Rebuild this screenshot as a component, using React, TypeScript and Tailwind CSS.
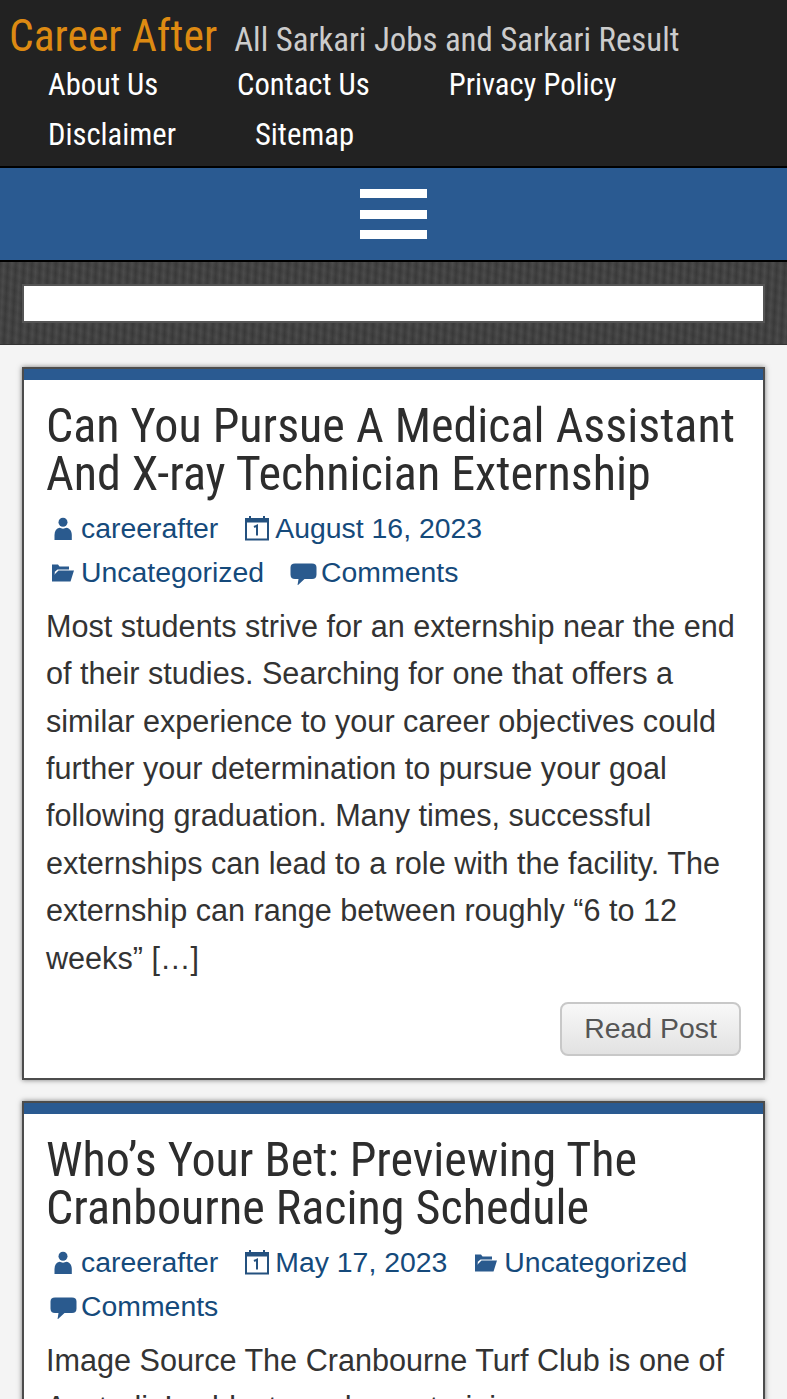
import React from 'react';

const CONDENSED = "font-['Roboto_Condensed','Roboto',sans-serif] [font-stretch:75%]";

function UserIcon() {
  return (
    <svg className="h-[25px] w-[25px] shrink-0 fill-[#2a5a8e]" viewBox="0 0 25 25">
      <circle cx="13" cy="6.300" r="4.500" />
      <path d="M4.500 24v-5c0-4 2-6.500 5-7.200 2 1.100 5 1.100 7 0 3.200 .7 5.300 3.200 5.300 7.200v5z" />
    </svg>
  );
}

function CalendarIcon() {
  return (
    <svg className="h-[25px] w-[25px] shrink-0" viewBox="0 0 25 25">
      <path fillRule="evenodd" fill="#24517f" d="M0 2h4V0h2v2h12V0h2v2h4v22.500H0zM2 6.500v16h20v-16z" />
      <path fill="none" stroke="#24517f" strokeWidth="2" d="M9 11l3-1.500v10" />
    </svg>
  );
}

function FolderIcon() {
  return (
    <svg className="h-[25px] w-[25px] shrink-0 fill-[#2a5a8e]" viewBox="0 0 25 25">
      <path d="M2 4.500h6l1.500 2h9.500v3H7.500L4 12.500 5 10l-.5 6-2.500 4z" />
      <path d="M2 21.500V17L8.500 10.500H24L20.500 21.500z" />
    </svg>
  );
}

function CommentIcon() {
  return (
    <svg className="h-[25px] w-[27px] shrink-0 fill-[#2a5a8e]" viewBox="0 0 27 25">
      <path d="M5 3.500h17q4.500 0 4.500 4v7q0 4.500-4.500 4.500h-7.500L7.500 25.500l1-6.500H5q-4.500 0-4.500-4.500v-7q0-4 4.500-4z" />
    </svg>
  );
}

function Meta({ icon, text, className }: { icon: React.ReactNode; text: string; className: string }) {
  return (
    <a href="#" className={`flex h-11 items-center whitespace-nowrap ${className}`}>
      {icon}
      <span className="pb-px">{text}</span>
    </a>
  );
}

function Card({ title, meta, lines, button }: { title: string[]; meta: React.ReactNode; lines: string[]; button?: boolean }) {
  return (
    <article className="mx-[22px] mb-[21px] border-2 border-[#4c4c4c] bg-white shadow-[0_0_5px_rgba(0,0,0,0.5)]">
      <div className="h-[11px] bg-[#2a5a91]" />
      <h2 className={`pt-[21.5px] pl-[22px] text-[48.07px] leading-[48px] whitespace-nowrap text-[#2d2d2d] ${CONDENSED}`}>
        {title.map((t) => <span key={t} className="block">{t}</span>)}
      </h2>
      <div className="mt-[8.9px] pl-[26px] text-[28.4px] text-[#154a7b]">{meta}</div>
      <div className="mt-[8.3px] pl-[22px] text-[30.6px] leading-[47.4px] whitespace-nowrap text-[#333]">
        {lines.map((t) => <p key={t}>{t}</p>)}
      </div>
      {button && (
        <div className="flex justify-end pt-[20.3px] pr-[22px] pb-[22px]">
          <button className="h-[54px] w-[181px] rounded-lg border-2 border-[#c8c8c8] bg-linear-to-b from-[#f8f8f8] to-[#e2e2e2] pb-0.5 text-[28.4px] text-[#555]">Read Post</button>
        </div>
      )}
    </article>
  );
}

export default function App() {
  return (
    <div className="h-[1399px] w-[787px] overflow-hidden bg-[#f4f4f4] font-['Liberation_Sans',sans-serif]">
      <header className={`h-[168px] border-b-2 border-black bg-[#222] whitespace-nowrap ${CONDENSED}`}>
        <div className="flex h-[59.5px] items-baseline pt-[8.5px] pl-[9px] leading-[56px]">
          <span className="text-[43.6px] text-[#dd8a12]">Career After</span>
          <span className="ml-[17px] text-[32.8px] text-[#ccc]">All Sarkari Jobs and Sarkari Result</span>
        </div>
        <nav className="pl-[48px] text-[30.6px] leading-[50px] text-white">
          <div className="flex gap-[79px]"><a>About Us</a><a>Contact Us</a><a>Privacy Policy</a></div>
          <div className="flex gap-[79px]"><a>Disclaimer</a><a>Sitemap</a></div>
        </nav>
      </header>
      <button className="flex h-[94px] w-full flex-col items-center gap-[11.5px] border-b-2 border-black bg-[#2a5a91] pt-[21px]">
        <span className="h-[9px] w-[67px] bg-white" />
        <span className="h-[9px] w-[67px] bg-white" />
        <span className="h-[9px] w-[67px] bg-white" />
      </button>
      <div className="h-[83px] border-b border-[#333] bg-[repeating-linear-gradient(20deg,#0000_0px,#0001_5px,#0000_10px),repeating-linear-gradient(93deg,#3c3c3c_0px,#4c4c4c_4px,#3c3c3c_8px)] px-[22px] pt-[22px]">
        <div className="h-[39px] border-2 border-[#555] bg-white" />
      </div>
      <main className="pt-[22px]">
        <Card
          title={['Can You Pursue A Medical Assistant', 'And X-ray Technician Externship']}
          meta={<>
            <div className="flex"><Meta icon={<UserIcon />} text="careerafter" className="gap-[6px]" /><Meta icon={<CalendarIcon />} text="August 16, 2023" className="ml-[26.5px] gap-[5.5px]" /></div>
            <div className="flex"><Meta icon={<FolderIcon />} text="Uncategorized" className="gap-[6px]" /><Meta icon={<CommentIcon />} text="Comments" className="ml-[26px] gap-[4px]" /></div>
          </>}
          lines={['Most students strive for an externship near the end', 'of their studies. Searching for one that offers a', 'similar experience to your career objectives could', 'further your determination to pursue your goal', 'following graduation. Many times, successful', 'externships can lead to a role with the facility. The', 'externship can range between roughly “6 to 12', 'weeks” […]']}
          button
        />
        <Card
          title={['Who’s Your Bet: Previewing The', 'Cranbourne Racing Schedule']}
          meta={<>
            <div className="flex"><Meta icon={<UserIcon />} text="careerafter" className="gap-[6px]" /><Meta icon={<CalendarIcon />} text="May 17, 2023" className="ml-[26.5px] gap-[5.5px]" /><Meta icon={<FolderIcon />} text="Uncategorized" className="ml-[26px] gap-[6px]" /></div>
            <div className="flex"><Meta icon={<CommentIcon />} text="Comments" className="gap-[4px]" /></div>
          </>}
          lines={['Image Source The Cranbourne Turf Club is one of', 'Australia’s oldest racehorse training venues']}
        />
      </main>
    </div>
  );
}
